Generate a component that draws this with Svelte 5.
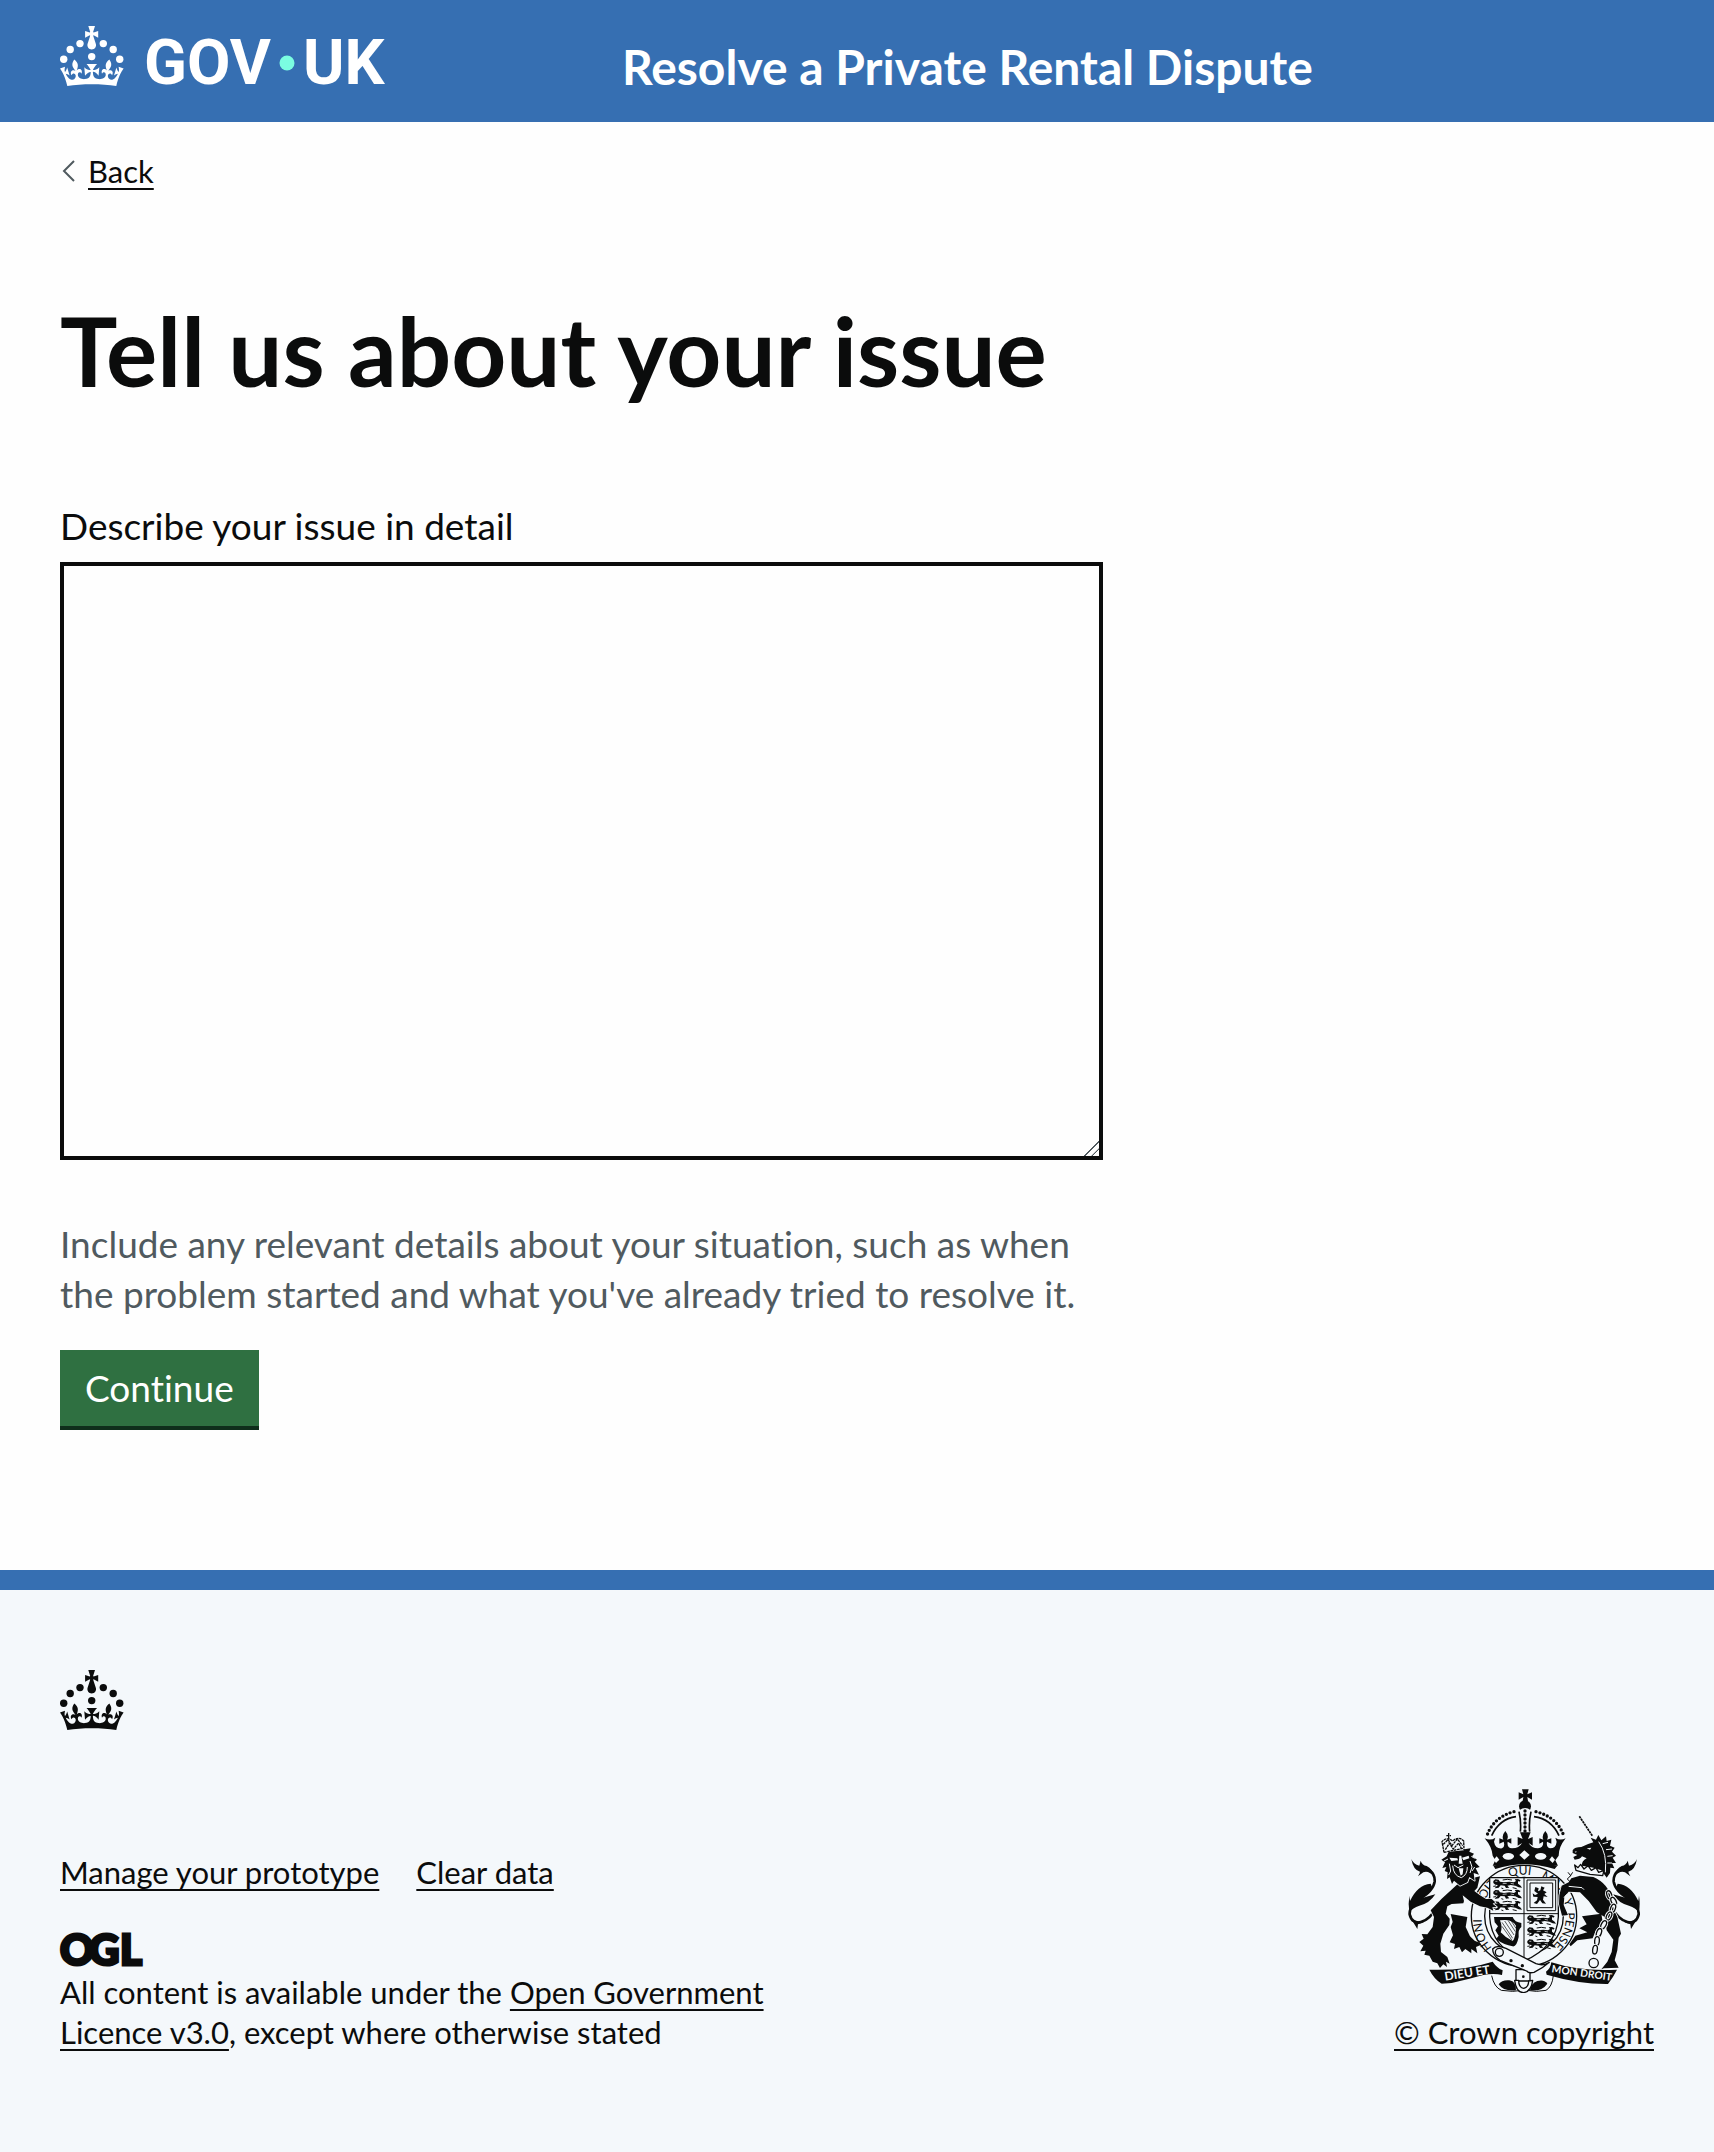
<script>
  let issue = $state('');

  const chain = [
    [688, 374, -20], [701, 393, -25], [699, 414, 20], [687, 437, 25],
    [671, 463, 28], [657, 487, 20], [651, 512, 5], [645, 538, 8]
  ];
  const lionsTop = [324, 356, 390];
  const lionsBottom = [432, 468, 504];
  const motto = [['HONI', 45], ['SOIT', 178], ['QUI', 300], ['MAL', 396], ['Y', 492], ['PENSE', 530]];
</script>

{#snippet crown()}
  <svg class="crown" viewBox="0 0 64 60" aria-hidden="true">
    <circle cx="20" cy="17.6" r="3.7" />
    <circle cx="10.2" cy="23.5" r="3.7" />
    <circle cx="3.7" cy="33.2" r="3.7" />
    <circle cx="31.7" cy="30.6" r="3.7" />
    <circle cx="43.3" cy="17.6" r="3.7" />
    <circle cx="53.2" cy="23.5" r="3.7" />
    <circle cx="59.7" cy="33.2" r="3.7" />
    <path d="M33.1,9.8c.2-.1.3-.3.5-.5l4.6,2.4v-6.8l-4.6,1.5c-.1-.2-.3-.3-.5-.5l1.9-5.9h-6.7l1.9,5.9c-.2.1-.3.3-.5.5l-4.6-1.5v6.8l4.6-2.4c.1.2.3.3.5.5l-2.6,8c-.9,2.8,1.2,5.7,4.1,5.7h0c3,0,5.1-2.9,4.1-5.7l-2.6-8ZM37,37.9s-3.4,3.8-4.1,6.1c2.2,0,4.2-.5,6.4-2.8l-.7,8.5c-2-2.8-4.4-4.1-5.7-3.8.1,3.1.5,6.7,5.8,7.2,3.7.3,6.7-1.5,7-3.8.4-2.6-2-4.3-3.7-1.6-1.4-4.5,2.4-6.1,4.9-3.2-1.9-4.5-1.8-7.7,2.4-10.9,3,4,2.6,7.3-1.2,11.1,2.4-1.3,6.2,0,4,4.6-1.2-2.8-3.7-2.2-4.2.2-.3,1.7.7,3.7,3,4.2,1.9.3,4.7-.9,7-5.9-1.3,0-2.4.7-3.9,1.7l2.4-8c.6,2.3,1.4,3.7,2.2,4.5.6-1.6.5-2.8,0-5.3l5,1.8c-2.6,3.6-5.2,8.7-7.3,17.5-7.4-1.1-15.7-1.7-24.5-1.7h0c-8.8,0-17.1.6-24.5,1.7-2.1-8.9-4.7-13.9-7.3-17.5l5-1.8c-.5,2.5-.6,3.7,0,5.3.8-.8,1.6-2.3,2.2-4.5l2.4,8c-1.5-1-2.6-1.7-3.9-1.7,2.3,5,5.2,6.2,7,5.9,2.3-.4,3.3-2.4,3-4.2-.5-2.4-3-3.1-4.2-.2-2.2-4.6,1.6-6,4-4.6-3.7-3.7-4.2-7.1-1.2-11.1,4.2,3.2,4.3,6.4,2.4,10.9,2.5-2.8,6.3-1.3,4.9,3.2-1.8-2.7-4.1-1-3.7,1.6.3,2.3,3.3,4.1,7,3.8,5.4-.5,5.7-4.2,5.8-7.2-1.3-.2-3.7,1-5.7,3.8l-.7-8.5c2.2,2.3,4.2,2.7,6.4,2.8-.7-2.3-4.1-6.1-4.1-6.1h10.6,0Z" />
  </svg>
{/snippet}

{#snippet smallLion(x, y)}
  <g transform="translate({x} {y})">
    <path d="M2 8L8 3L18 4L22 10L34 12L50 10L64 12L70 8L66 3L76 2L84 6L80 10L76 8L76 16L84 22L88 28L78 27L68 22L54 20L44 22L50 28L40 29L36 22L24 21L18 28L6 30L10 25L16 20L8 19L2 14Z" />
    <path d="M2 24L10 23M60 28L72 31M26 29L32 31M30 5L44 3L58 5" class="ink3" />
    <path d="M8 9H14M30 16L42 15M54 15L64 17" class="paper2" />
  </g>
{/snippet}

{#snippet tail()}
  <path d="M172 408C142 462 98 472 89 432C86 390 158 378 164 334C166 304 140 290 118 290" class="ink8" />
  <path d="M94 266Q100 282 118 286L122 271Q126 284 140 287Q158 296 161 318Q146 300 130 306L114 318Q120 308 120 304Q100 300 94 266Z" />
  <path d="M152 340Q112 344 90 392L88 376Q84 400 88 426Q98 412 118 406Q148 400 166 372Q144 378 124 384Q136 370 158 354Z" />
  <path d="M96 450L112 476L114 462L132 456Z" />
{/snippet}

<header class="header">
  <div class="header-logo">
    <a class="logo" href="#home" aria-label="GOV.UK">
      {@render crown()}
      <span class="wordmark">
        <span>GOV</span>
        <svg class="dot" viewBox="0 0 16 16" aria-hidden="true"><circle cx="8" cy="8" r="7.5" /></svg>
        <span>UK</span>
      </span>
    </a>
  </div>
  <a class="service" href="#service">Resolve a Private Rental Dispute</a>
</header>

<div class="page">
  <a class="back" href="#back">
    <svg class="chevron" viewBox="0 0 14 24" aria-hidden="true"><path d="M13 2L3 12L13 22" /></svg>
    <span>Back</span>
  </a>
  <main>
    <h1>Tell us about your issue</h1>
    <form onsubmit={(e) => e.preventDefault()}>
      <label for="issue">Describe your issue in detail</label>
      <textarea id="issue" aria-describedby="issue-hint" bind:value={issue}></textarea>
      <p id="issue-hint" class="hint">Include any relevant details about your situation, such as when the problem started and what you've already tried to resolve it.</p>
      <button type="submit">Continue</button>
    </form>
  </main>
</div>

<footer class="footer">
  {@render crown()}
  <div class="footer-meta">
    <div class="footer-text">
      <nav class="footer-links" aria-label="Support links">
        <a href="#manage">Manage your prototype</a>
        <a href="#clear">Clear data</a>
      </nav>
      <svg class="ogl" viewBox="0 0 84 34" role="img" aria-label="Open Government Licence">
        <text x="0 29 60" y="32">OGL</text>
      </svg>
      <p>All content is available under the <a href="#ogl">Open Government Licence v3.0</a>, except where otherwise stated</p>
    </div>
    <a class="copyright" href="#copyright">
      <svg class="arms" viewBox="84 56 696 612" aria-hidden="true">
        <!-- garter and motto -->
        <ellipse cx="432" cy="437" rx="158" ry="152" class="ring" />
        <ellipse cx="432" cy="437" rx="118" ry="116" class="ring" />
        <path id="motto" class="none" d="M372 560A128 124 0 0 1 306 437A126 124 0 0 1 558 437A128 124 0 0 1 470 556" />
        {#each motto as [word, offset]}
          <text class="motto"><textPath href="#motto" startOffset={offset}>{word}</textPath></text>
        {/each}

        <!-- shield -->
        <path d="M329 322H535V440Q530 530 432 572Q334 530 329 440Z" class="shield" />
        <path d="M432 322V572M329 430H535" class="ink3" />
        {#each lionsTop as y}{@render smallLion(338, y)}{/each}
        {#each lionsBottom as y}{@render smallLion(440, y)}{/each}
        <rect x="441" y="329" width="86" height="92" class="thin" />
        <rect x="450" y="338" width="68" height="74" class="thin" />
        <path d="M466 350L476 354L474 363L481 360L484 348L494 352L489 360L500 366L493 371L503 380L491 378L489 388L498 400L487 399L480 389L471 401L461 398L471 390L473 380L460 379L458 369L465 374L474 370L463 362Z" />
        <path d="M342 440H398Q404 456 424 458V470Q414 476 416 500Q410 530 398 528Q372 524 348 506L356 496L346 480L354 468L344 456Z" />
        <path d="M360 450Q396 444 408 466Q408 500 398 512Q376 502 362 486Q368 470 360 450Z" class="paper" />
        <path d="M366 456L398 504M374 452L402 494M384 450L406 484M394 452L408 474M366 468L396 510" class="hair" />

        <!-- royal crown -->
        <path d="M428 92L430 80L416 88V66L430 72L426 57H446L442 72L456 66V88L442 80L444 92Z" />
        <circle cx="435" cy="108" r="18" />
        <path d="M418 120Q436 106 452 120L456 186H414Z" class="paper" />
        <path d="M417 124Q424 155 421 184M453 124Q446 155 449 184" class="ink5" />
        <path d="M435 122V184" class="beads" />
        <path d="M402 124Q340 140 320 198M468 124Q532 140 552 198" class="beads" />
        <path d="M408 139Q358 146 335 196M462 139Q514 146 537 196" class="ink5" />
        <path d="M314 204Q332 212 346 202L342 214Q346 236 366 234Q376 230 371 214L358 220V204L370 208Q364 196 376 182Q388 196 381 208L394 204V220L383 214Q380 232 396 234Q418 234 426 218L413 226V200L428 206L420 186H452L444 206L458 200V226L446 218Q454 234 474 234Q492 232 489 214L478 220V204L490 208Q484 196 496 182Q508 196 501 208L514 204V220L501 214Q498 232 510 234Q528 234 530 214L526 202Q540 212 557 204Q536 230 536 256L526 270L534 286Q432 276 338 286L346 270L338 256Q336 230 314 204Z" />
        <path d="M340 286Q432 262 532 286L524 296Q432 268 346 296Z" />
        <g class="paper">
          <ellipse cx="385" cy="258" rx="17" ry="10" />
          <ellipse cx="482" cy="258" rx="17" ry="10" />
          <path d="M433 240L449 254L433 268L418 254Z" />
          <path d="M350 258L358 268L348 278L341 268Z" />
          <path d="M516 258L508 268L518 278L525 268Z" />
        </g>

        <!-- lion -->
        {@render tail()}
        <path class="edged" d="M243 332L300 318L292 352L283 362L300 375L318 386L335 386L346 396L338 400L350 410L337 411L340 421L322 412L300 408L272 394L248 375L252 392L250 399L215 401L202 408L197 430L209 445L208 464L190 490L181 520L183 545L202 560L209 580L198 574L201 590L190 582L180 593L172 579L158 574L148 556L133 553L137 541L121 543L130 526L118 515L131 505L125 491L142 492L158 470L162 440L152 420L185 385Z" />
        <path d="M212 431L262 440L257 470L270 498L284 511L300 518L302 524L288 530L292 549L274 536L274 549L256 536L246 546L238 530L222 536L225 521L209 516L219 495L212 470L218 455Z" />
        <path class="edged" d="M184 268L200 258L206 244L272 234L268 244L282 250L276 258L291 268L284 274L299 290L287 294L297 313L281 308L284 331L268 320L262 336L240 346L222 331L216 341L209 321L201 326L203 306L194 302L199 290L187 293L195 276Z" />
        <path d="M222 284L234 292L250 284M218 286Q220 316 244 322Q262 314 262 290M208 280L212 302L206 314M270 272L276 290L270 308M284 290L276 302M192 272L204 266M274 258L284 264" class="paper3" />
        <path d="M208 262L232 264L234 270L214 272ZM246 262L266 256L268 264L250 270ZM238 256L244 256L248 280L236 280ZM236 294L250 294L248 312L242 316Z" class="paper" />
        <path d="M192 246L186 214Q200 198 218 212Q236 196 251 212L252 240M192 246L250 234M206 188V212M199 196H213M190 222L204 208L216 226L232 206L248 226M206 216L220 236L236 218L244 234M196 238L206 222" class="crownlet" />

        <!-- unicorn -->
        <g transform="translate(865 0) scale(-1 1)">{@render tail()}</g>
        <path d="M598 138L638 198" class="horn" />
        <path d="M578 240Q584 230 604 230Q620 222 640 216L632 202L648 208L655 194L664 210L678 198L680 212L694 208L690 226L704 232L696 244L708 256L698 262L708 278L696 278L703 294L691 292L690 308L680 322L664 300L640 292L606 286Q604 272 620 264L606 258Q600 268 584 268L580 260L592 254L578 248Z" />
        <path d="M656 214Q682 250 676 306M668 220L684 216M678 238L696 236M682 258L698 256M682 278L696 278" class="paper3" />
        <path d="M620 234L634 232L630 238ZM584 244L590 243L588 247Z" class="paper" />
        <path d="M584 284L594 292L602 282L612 296L624 286L634 300L648 292L656 306L672 300L668 316L630 312L588 300Z" class="band" />
        <path class="edged" d="M574 324L600 316L640 320Q686 340 694 386Q700 420 712 440L723 490L716 502L712 540L704 570L716 592L672 594L664 597L682 574L695 545L700 508L680 480L674 440L650 425L626 392L600 366L566 364L553 380L551 404L564 434L546 436L537 402L538 375L545 346L566 336Z" />
        <path d="M566 348L606 352L612 358M560 372L552 382" class="paper3" />
        <path d="M564 306L572 316L562 326L572 336M578 306L570 318" class="ink3" />
        <path d="M606 438L664 430L668 455L646 484L638 504L592 510L572 528L568 522L586 496L622 486L598 474L620 462Z" />
        {#each chain as [x, y, a]}
          <ellipse cx={x} cy={y} rx="7" ry="13" class="halo" transform="rotate({a} {x} {y})" />
          <ellipse cx={x} cy={y} rx="7" ry="13" class="link" transform="rotate({a} {x} {y})" />
        {/each}
        <circle cx="641" cy="578" r="14" class="link" />

        <!-- motto scroll -->
        <path d="M148 598Q250 602 338 574Q350 592 368 600L366 614Q342 608 310 614Q260 628 215 638L185 640Q162 626 148 598Z" />
        <path d="M514 576Q600 604 711 598Q700 620 684 641Q600 642 500 613L498 604Q512 594 514 576Z" />
        <text class="scroll" transform="translate(196 631) rotate(-9)">DIEU ET</text>
        <text class="scroll small" transform="translate(514 606) rotate(8)">MON DROIT</text>
        <path d="M335 616Q342 650 364 660Q400 666 428 660M520 616Q516 650 498 660Q470 666 440 660" class="ink3" />
        <path d="M356 642Q366 628 388 630Q410 634 408 660Q370 664 356 642Z" />
        <path d="M502 640Q492 626 472 632Q452 640 450 660Q486 664 502 640Z" />

        <!-- garter buckle -->
        <path d="M408 598H450V632H408Z" class="band" />
        <path d="M338 536Q350 522 378 534L468 580Q490 588 508 576Q488 594 462 606Q446 610 440 602L360 570Q338 556 338 536Z" class="band" />
        <circle cx="358" cy="546" r="12" class="band" />
        <circle cx="393" cy="571" r="5" /><circle cx="427" cy="586" r="5" /><circle cx="430" cy="619" r="4" />
        <path d="M404 630Q408 666 430 667Q454 664 458 630L446 632Q446 652 430 654Q416 652 416 630Z" class="band" />
      </svg>
      <span>© Crown copyright</span>
    </a>
  </div>
</footer>

<style>
  :global(body) {
    margin: 0;
    background: #fefefe;
    color: #0b0c0c;
    font-family: Lato, "Liberation Sans", sans-serif;
    font-size: 31px;
    font-variant-ligatures: none;
    line-height: 40px;
  }

  a {
    color: inherit;
    text-decoration: underline;
    text-decoration-thickness: 2px;
    text-decoration-skip-ink: none;
    text-underline-offset: 5px;
  }

  .crown {
    display: block;
    width: 64px;
    height: 60px;
    fill: currentColor;
  }

  .header {
    display: flex;
    align-items: flex-end;
    gap: 4px;
    padding: 26px 60px 36px;
    background: #366fb2;
    color: #fff;
  }

  .header-logo {
    flex: 0 0 35%;
  }

  .logo {
    display: inline-flex;
    align-items: flex-end;
    gap: 20px;
    text-decoration: none;
    vertical-align: bottom;
  }

  .wordmark {
    display: flex;
    align-items: center;
    gap: 8px;
    font: 700 63px/46px Roboto, sans-serif;
  }

  .dot {
    width: 16px;
    height: 16px;
    fill: #7bfde1;
  }

  .service {
    font-size: 48px;
    font-weight: 700;
    line-height: 38px;
    text-decoration: none;
  }

  .page {
    padding: 29px 60px 144px;
  }

  .back {
    display: inline-flex;
    align-items: center;
    gap: 12px;
    text-decoration: none;
    vertical-align: top;
  }

  .back span,
  .copyright span {
    text-decoration: underline;
    text-decoration-thickness: 2px;
    text-decoration-skip-ink: none;
    text-underline-offset: 5px;
  }

  .chevron {
    width: 16px;
    height: 24px;
    fill: none;
    stroke: #505a5f;
    stroke-width: 2;
  }

  main {
    width: calc((100% + 60px) * 2 / 3 - 60px);
    padding-top: 109px;
  }

  h1 {
    margin: 0 0 101px;
    font-size: 96px;
    font-weight: 700;
    line-height: 100px;
  }

  form {
    font-size: 37px;
    line-height: 50px;
  }

  label {
    display: block;
    margin-bottom: 11px;
  }

  textarea {
    display: block;
    box-sizing: border-box;
    width: 100%;
    height: 598px;
    padding: 10px;
    border: 4px solid #0b0c0c;
    border-radius: 0;
    background: #fefefe;
    color: inherit;
    font: inherit;
    resize: vertical;
  }

  textarea::-webkit-scrollbar {
    width: 18px;
  }

  textarea::-webkit-resizer {
    background: linear-gradient(135deg, transparent 49%, #505a5f 50%, #505a5f 55%, transparent 56%, transparent 73%, #505a5f 74%, #505a5f 79%, transparent 80%);
  }

  .hint {
    margin: 59px 0 31px;
    color: #505a5f;
  }

  button {
    display: block;
    padding: 13px 25px;
    border: 0;
    background: #2f7041;
    box-shadow: 0 4px 0 #0f2e1b;
    color: #fff;
    font: inherit;
    font-variant-ligatures: none;
  }

  .footer {
    padding: 80px 60px 100px;
    border-top: 20px solid #366fb2;
    background: #f4f8fb;
  }

  .footer-meta {
    display: flex;
    align-items: flex-end;
    justify-content: space-between;
    margin-top: 59px;
  }

  .footer-text {
    max-width: 740px;
  }

  .footer-links {
    display: flex;
    gap: 37px;
    margin-bottom: 41px;
  }

  .ogl {
    display: block;
    width: 84px;
    height: 34px;
    margin-bottom: 5px;
    overflow: visible;
    font: 900 42px Lato, sans-serif;
    fill: #0b0c0c;
    stroke: #0b0c0c;
    stroke-width: 3;
  }

  p {
    margin: 0;
  }

  .copyright {
    display: flex;
    flex-direction: column;
    align-items: center;
    gap: 19px;
    text-decoration: none;
    white-space: nowrap;
  }

  .arms {
    width: 232px;
    height: 204px;
    fill: #0b0c0c;
    stroke-linejoin: round;
  }

  .ring,
  .shield,
  .band,
  .link {
    fill: #f4f8fb;
    stroke: #0b0c0c;
    stroke-width: 4;
  }

  .halo,
  .link {
    fill: none;
  }

  .halo {
    stroke: #f4f8fb;
    stroke-width: 10;
  }

  .none {
    fill: none;
  }

  .thin,
  .hair,
  .crownlet {
    fill: none;
    stroke: #0b0c0c;
    stroke-width: 3;
  }

  .hair {
    stroke-width: 2;
  }

  .crownlet {
    fill: #f4f8fb;
    stroke-width: 4;
    stroke-dasharray: 8 2;
  }

  .ink3,
  .ink5,
  .ink8,
  .beads,
  .horn {
    fill: none;
    stroke: #0b0c0c;
    stroke-width: 3;
  }

  .ink5 {
    stroke-width: 5;
  }

  .ink8 {
    stroke-width: 8;
  }

  .beads {
    stroke-width: 10;
    stroke-linecap: round;
    stroke-dasharray: 0 12;
  }

  .horn {
    stroke-width: 5;
    stroke-dasharray: 7 2;
  }

  .paper {
    fill: #f4f8fb;
  }

  .paper2,
  .paper3 {
    fill: none;
    stroke: #f4f8fb;
    stroke-width: 2;
  }

  .paper3 {
    stroke-width: 3;
  }

  .edged {
    stroke: #f4f8fb;
    stroke-width: 5;
    paint-order: stroke;
  }

  .motto {
    font: 400 36px Lato, sans-serif;
  }

  .scroll {
    font: 700 36px Lato, sans-serif;
    fill: #f4f8fb;
  }

  .small {
    font-size: 31px;
  }
</style>
